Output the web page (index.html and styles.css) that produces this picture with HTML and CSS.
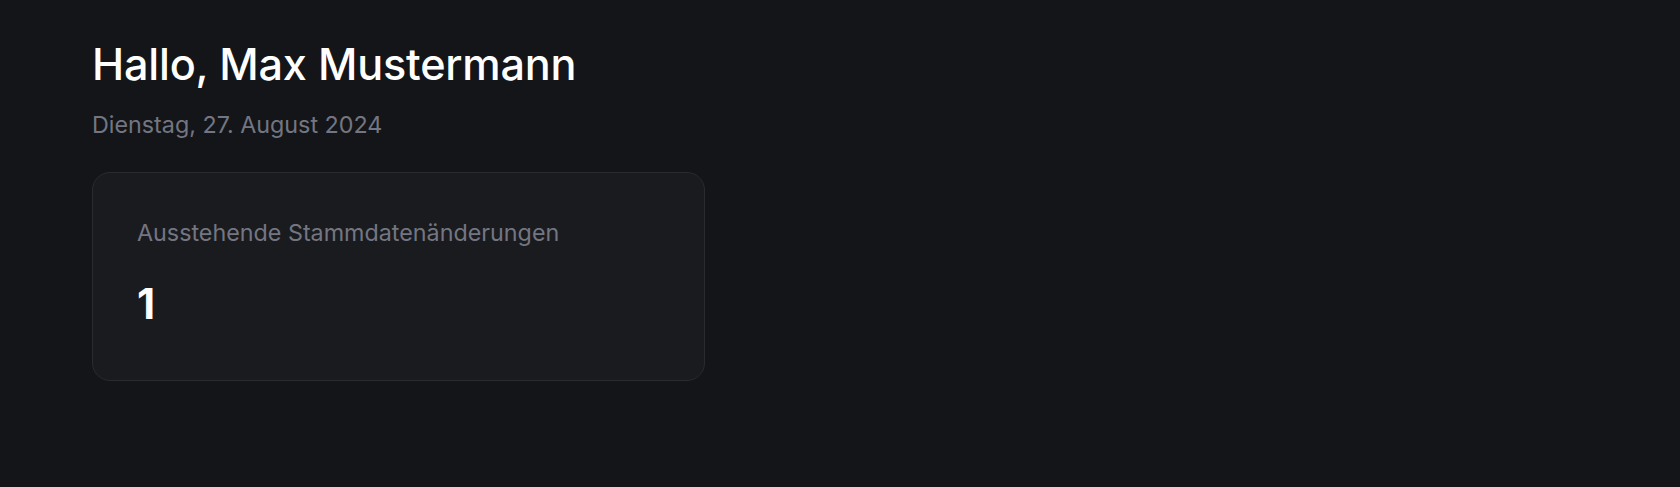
FILE: index.html
```html
<!DOCTYPE html>
<html lang="de">
<head>
    <meta charset="UTF-8">
    <meta name="viewport" content="width=device-width, initial-scale=1.0">
    <title>Dashboard</title>
    <link rel="stylesheet" href="styles.css">
</head>
<body>
    <div class="page">
        <h1 class="greeting">Hallo, Max Mustermann</h1>
        <p class="date">Dienstag, 27. August 2024</p>

        <div class="cards">
            <div class="card">
                <div class="card-label">Ausstehende Stammdatenänderungen</div>
                <div class="card-value">1</div>
            </div>
        </div>
    </div>
</body>
</html>
```

FILE: styles.css
```css
* {
    margin: 0;
    padding: 0;
    box-sizing: border-box;
}

html, body {
    height: 100%;
}

body {
    background-color: #141518;
    color: #ffffff;
    font-family: Inter, "Noto Sans", sans-serif;
}

.page {
    padding: 38px 92px;
}

.greeting {
    font-size: 43.2px;
    font-weight: 500;
    line-height: 52px;
    letter-spacing: -0.2px;
}

.date {
    margin-top: 18px;
    font-size: 23.3px;
    line-height: 34px;
    color: #737682;
}

.cards {
    margin-top: 30px;
    display: grid;
    grid-template-columns: 613px;
}

.card {
    height: 209px;
    padding: 43px 44px;
    background-color: #1a1b1e;
    border: 1px solid #2a2b2f;
    border-radius: 18px;
}

.card-label {
    font-size: 23.3px;
    line-height: 34px;
    color: #737682;
}

.card-value {
    margin-top: 29px;
    font-size: 42px;
    font-weight: 700;
    line-height: 50px;
}
```
